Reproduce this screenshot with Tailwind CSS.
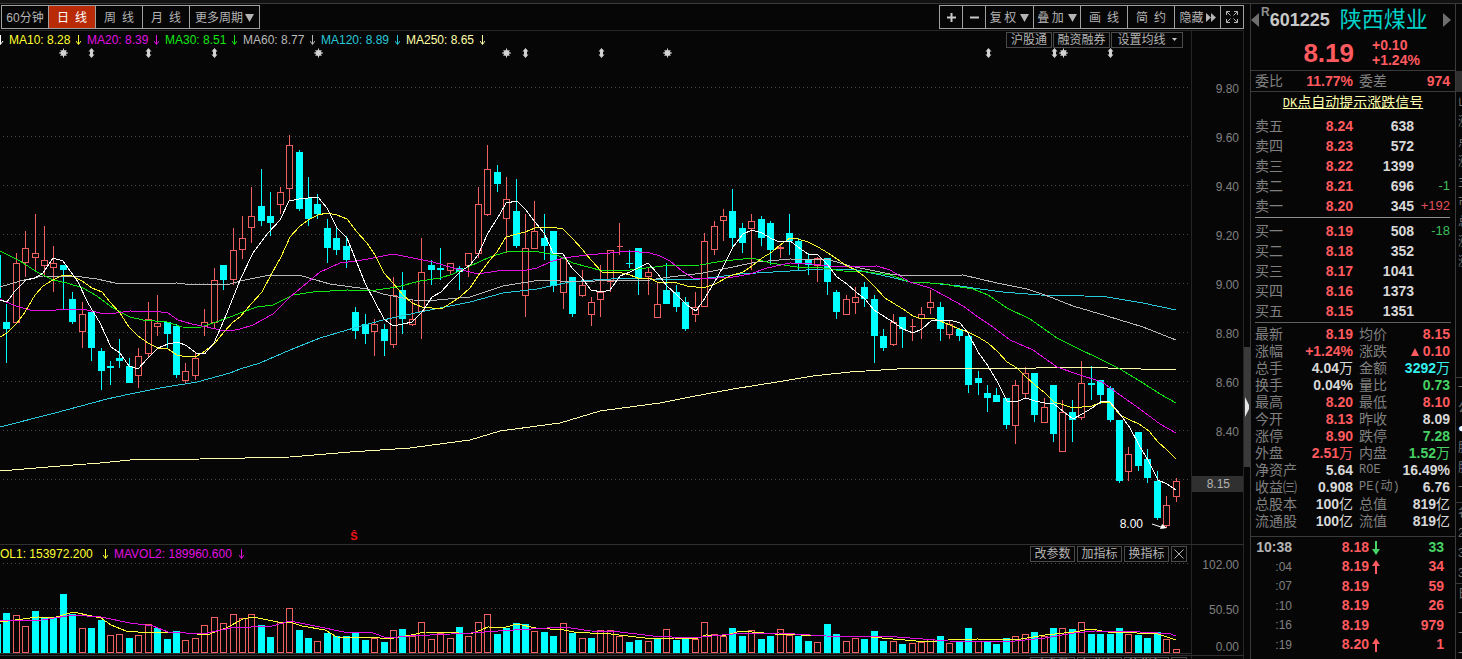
<!DOCTYPE html>
<html lang="zh-CN">
<head>
<meta charset="utf-8">
<meta name="viewport" content="width=device-width, initial-scale=1">
<title>陕西煤业 601225</title>
<script src="https://cdn.jsdelivr.net/npm/@tailwindcss/browser@4"></script>
</head>
<body class="flex h-screen flex-col overflow-hidden bg-[#060606] font-['Liberation_Sans','Noto_Sans_CJK_SC',sans-serif] text-xs text-[#b4b4b4]">
<div class="h-1 shrink-0 border-b border-[#3a3a3a] bg-[#121212]"></div>
<div class="flex min-h-0 flex-1">

  <main class="flex min-w-0 flex-1 flex-col">
    <header class="flex h-[27px] shrink-0 items-start justify-between border-b border-[#262626] pt-px pl-px">
      <nav class="flex h-6 divide-x divide-[#a0a0a0] border border-[#a0a0a0]">
        <button class="w-[47px] pt-px whitespace-nowrap">60分钟</button>
        <button class="w-[47px] bg-[#b92a06] pt-px whitespace-nowrap text-white">日&ensp;线</button>
        <button class="w-[47px] pt-px whitespace-nowrap">周&ensp;线</button>
        <button class="w-[47px] pt-px whitespace-nowrap">月&ensp;线</button>
        <button class="flex w-[69px] items-center justify-center gap-0.5 pt-px whitespace-nowrap">更多周期<svg class="h-2 w-[9px]" viewBox="0 0 9 8"><path d="M0 0h9L4.500 8z" fill="#b4b4b4"/></svg></button>
      </nav>
      <div class="flex h-6 divide-x divide-[#a0a0a0] border border-[#a0a0a0]">
        <button class="flex w-[23px] items-center justify-center" aria-label="放大"><svg class="size-[9px]" viewBox="0 0 9 9"><path d="M0 4.500h9M4.500 0v9" stroke="#c8c8c8" stroke-width="2"/></svg></button>
        <button class="flex w-[23px] items-center justify-center" aria-label="缩小"><svg class="size-[9px]" viewBox="0 0 9 9"><path d="M0 4.500h9" stroke="#c8c8c8" stroke-width="2"/></svg></button>
        <button class="flex w-[48px] items-center justify-center gap-1 pt-px whitespace-nowrap">复&thinsp;权<svg class="h-2 w-[9px]" viewBox="0 0 9 8"><path d="M0 0h9L4.500 8z" fill="#b4b4b4"/></svg></button>
        <button class="flex w-[47px] items-center justify-center gap-1 pt-px whitespace-nowrap">叠&thinsp;加<svg class="h-2 w-[9px]" viewBox="0 0 9 8"><path d="M0 0h9L4.500 8z" fill="#b4b4b4"/></svg></button>
        <button class="w-[47px] pt-px whitespace-nowrap">画&ensp;线</button>
        <button class="w-[47px] pt-px whitespace-nowrap">简&ensp;约</button>
        <button class="flex w-[46px] items-center justify-center gap-0.5 pt-px whitespace-nowrap">隐藏<svg class="h-[9px] w-2.5" viewBox="0 0 10 9"><path d="M0 0l5 4.500L0 9zM5 0l5 4.500L5 9z" fill="#b4b4b4"/></svg></button>
        <button class="flex w-[22px] items-center justify-center" aria-label="全屏"><svg class="size-3" viewBox="0 0 12 12" fill="none" stroke="#b4b4b4"><path d="M.5 4V.5H4M.5.5l4 4M8 .5h3.500V4M11.500.5l-4 4M.5 8v3.500H4M.5 11.500l4-4M11.500 8v3.500H8M11.500 11.500l-4-4"/></svg></button>
      </div>
    </header>

    <section class="flex shrink-0">
      <div class="relative min-w-0 flex-1">
        <div class="flex h-[17px] items-center justify-between pr-2">
          <div class="flex items-center leading-4 whitespace-nowrap">
            <span class="flex w-[9px] items-center text-white"><svg class="h-2.5 w-1" viewBox="2 0 4 10" fill="none" stroke="currentColor"><path d="M2.500 0v9M0 6l2.500 3.500L5 6"/></svg></span>
            <span class="flex w-[78px] items-center justify-between pr-1.5 text-[#ffff32]">MA10: 8.28<svg class="h-2.5 w-[5px]" viewBox="0 0 5 10" fill="none" stroke="currentColor"><path d="M2.500 0v9M0 6l2.500 3.500L5 6"/></svg></span>
            <span class="flex w-[78px] items-center justify-between pr-1.5 text-[#e010e0]">MA20: 8.39<svg class="h-2.5 w-[5px]" viewBox="0 0 5 10" fill="none" stroke="currentColor"><path d="M2.500 0v9M0 6l2.500 3.500L5 6"/></svg></span>
            <span class="flex w-[78px] items-center justify-between pr-1.5 text-[#14e614]">MA30: 8.51<svg class="h-2.5 w-[5px]" viewBox="0 0 5 10" fill="none" stroke="currentColor"><path d="M2.500 0v9M0 6l2.500 3.500L5 6"/></svg></span>
            <span class="flex w-[78px] items-center justify-between pr-1.5 text-[#b9b9b9]">MA60: 8.77<svg class="h-2.5 w-[5px]" viewBox="0 0 5 10" fill="none" stroke="currentColor"><path d="M2.500 0v9M0 6l2.500 3.500L5 6"/></svg></span>
            <span class="flex w-[85px] items-center justify-between pr-1.5 text-[#28c8d8]">MA120: 8.89<svg class="h-2.5 w-[5px]" viewBox="0 0 5 10" fill="none" stroke="currentColor"><path d="M2.500 0v9M0 6l2.500 3.500L5 6"/></svg></span>
            <span class="flex w-[85px] items-center justify-between pr-1.5 text-[#ffffaa]">MA250: 8.65<svg class="h-2.5 w-[5px]" viewBox="0 0 5 10" fill="none" stroke="currentColor"><path d="M2.500 0v9M0 6l2.500 3.500L5 6"/></svg></span>
          </div>
          <div class="flex gap-px leading-[14px] whitespace-nowrap">
            <button class="h-4 w-[46px] border border-[#4a4a4a]">沪股通</button>
            <button class="h-4 w-[57px] border border-[#4a4a4a]">融资融券</button>
            <button class="flex h-4 w-[72px] items-center justify-center gap-1.5 border border-[#4a4a4a]">设置均线<svg class="h-[3px] w-[5px]" viewBox="0 0 5 3"><path d="M0 0h5L2.500 3z" fill="#c8c8c8"/></svg></button>
          </div>
        </div>
        <svg id="price" class="block h-[496px] w-full" viewBox="0 48 1191 496" preserveAspectRatio="none" fill="none" shape-rendering="crispEdges" role="img" aria-label="日K线图">
          <path stroke="#484848" stroke-dasharray="1 3" d="M3 87.500H1191M3 136.500H1191M3 185.500H1191M3 234.500H1191M3 283.500H1191M3 332.500H1191M3 381.500H1191M3 430.500H1191M3 479.500H1191"/>
          <g id="candles"></g>
          <polyline stroke="#ffffaa" points="0,471 60,466 100,463 130,460 200,459 290,457 350,452 410,448 470,440 500,431 560,423 600,411 660,403 690,397 733,389 777,382 813,376 850,372 897,369 925,368.500 1000,368.400 1090,367.400 1120,368.400 1176,370"/>
          <polyline stroke="#28c8d8" points="0,427 55,413 107,399 130,394 160,388 197,382 230,373 240,369 260,363 290,350 320,338 347,330 383,320 420,312 470,302 503,293 537,289 570,282 593,280 630,278 670,280 700,279 740,274 790,271 823,269 857,270 890,277 910,282 930,283 960,286 980,289 1003,292 1040,295 1073,295.500 1107,297 1143,303 1176,310"/>
          <polyline stroke="#b9b9b9" points="0,287 20,281 43,276 77,276.400 97,279 115,283 143,284 177,283 193,285 230,284 240,281 270,275 300,275.400 330,284 367,289 383,294 413,300 433,300.400 470,297 503,286 540,280 580,282 610,280 643,281 670,277 703,273 723,269 757,262 790,259 830,260 850,266 890,274 910,276 963,275 997,283 1027,289 1045,295 1073,306 1107,316 1143,327 1176,340"/>
          <polyline stroke="#14e614" points="0,251 20,261 37,272 53,280 67,283 83,288 97,296 113,308 130,317 143,320 167,322 182,327 200,327.400 213,323 233,316 240,313 257,307 273,305 293,295 313,292 347,290 373,290.400 397,287 420,281 440,278 453,274 470,266 490,257 506,252 533,251 557,255 573,263 603,271 630,270 663,266 700,265 723,261 753,258 770,263 797,267 823,268 843,271 863,271.400 890,275 910,282 930,283 943,284 960,287 973,289 988,295 1007,308 1030,319 1057,338 1077,348 1100,359 1120,369 1143,383 1160,394 1176,403"/>
          <polyline stroke="#e010e0" points="0,299 13,305 30,310 50,311 63,309 87,310 100,313 113,313.400 130,311 157,311.400 168,313 178,320 192,324 207,327 220,330 233,330.400 240,329 253,325 273,314 290,297 308,282 320,272 340,263 357,261 373,258 393,254 413,258 433,262 453,268 470,272 478,274 497,271 527,270 537,268 550,262 563,258 587,255 610,253 628,251 650,253 660,256 670,261 682,271 693,278 703,279 733,277 750,274 767,268 790,263 807,263.400 837,267 877,266 890,270 910,282 930,288 947,297 963,306 978,317 993,327 1010,340 1033,350 1057,367 1077,374 1102,382 1120,395 1140,409 1160,424 1176,433"/>
          <polyline stroke="#ffff32" points="0,337 7,333 17,323 25,312 35,295 43,286 53,280 63,275 72,276 82,281 92,288 102,292 110,302 120,313 129,327 138,336 148,343 158,348 168,349 177,355 187,357 197,356 205,351 215,343 224,332 233,322 240,317 252,303 262,292 272,273 281,257 290,237 299,227 308,220 318,215 327,213 337,215 347,219 357,232 367,243 375,255 384,273 393,283 403,295 412,303 422,307 432,308 441,309 451,303 460,297 470,288 480,273 490,260 497,252 506,237 517,234 525,232 535,228 544,227 553,227.400 563,229 573,239 582,249 591,260 602,272 620,272.400 630,275 640,279 650,278 657,282 667,282.400 677,283 687,286 696,287 705,287.400 715,284 730,276 743,272 752,266 762,258 772,252 780,245 790,238 798,239 808,242 818,247 828,253 837,259 847,266 856,270 865,277 874,286 885,298 893,303 903,309 913,316 922,319 932,318 940,321 950,325 959,329 968,332 978,337 988,343 998,352 1007,362 1017,368 1026,377 1035,385 1045,393 1054,402 1064,405 1073,408 1082,407 1092,406 1102,402 1110,403 1120,415 1130,420 1139,424 1149,431 1158,442 1167,450 1176,459"/>
          <polyline stroke="#ffffff" points="0,300 7,302 15,291 26,280 35,278 43,273 53,258 63,261 78,282 88,303 100,323 111,347 120,353 129,366 138,369 148,358 158,348 168,344 178,342 187,346 196,353 205,353.400 214,343 224,320 233,298 240,280 253,253 268,233 280,220 289,201 299,199 318,197 327,208 337,228 347,238 355,258 365,283 375,302 384,319 393,326 403,324 412,322 422,312 432,297 441,292 451,281 460,272 470,265 478,255 488,233 500,214 506,203 517,201 526,210 535,222 544,233 553,253 563,254 572,268 582,278 591,290 602,292 610,290 620,276 630,272 640,267 648,263 657,273 667,286 677,295 687,305 696,311 705,298 714,283 723,267 733,247 743,234 752,230 762,233 772,239 780,242 790,241 798,247 808,254 818,255 828,265 837,277 847,284 856,292 865,299 874,310 885,317 893,322 903,329 913,333 922,329 932,320 941,321 950,320 960,323 968,333 978,352 988,366 998,383 1007,401 1017,401.400 1026,398 1035,401 1045,403 1054,404 1064,412 1073,419 1082,414 1092,408 1102,401 1110,402 1120,414 1130,428 1139,445 1149,462 1158,480 1167,484 1176,490"/>
          <g id="events" shape-rendering="auto"></g>
          <g shape-rendering="auto"><path stroke="#fff" d="M1152 524l12 4"/><path fill="#fff" d="M1167 528l-7 1 2-5z"/></g>
        </svg>
        <span class="absolute right-12 bottom-3 leading-4 text-white">8.00</span>
        <span class="absolute bottom-px left-[350px] w-2 text-center text-[11px] leading-[14px] font-bold text-[#f01414]">Ŝ</span>
      </div>
      <div class="w-[53px] border-x border-[#262626] pt-[34px] text-right text-[#808080]">
        <div class="h-[49px] pr-1 leading-[49px]">9.80</div>
        <div class="h-[49px] pr-1 leading-[49px]">9.60</div>
        <div class="h-[49px] pr-1 leading-[49px]">9.40</div>
        <div class="h-[49px] pr-1 leading-[49px]">9.20</div>
        <div class="h-[49px] pr-1 leading-[49px]">9.00</div>
        <div class="h-[49px] pr-1 leading-[49px]">8.80</div>
        <div class="h-[49px] pr-1 leading-[49px]">8.60</div>
        <div class="h-[49px] pr-1 leading-[49px]">8.40</div>
        <div class="mt-[19px] h-4 bg-[#303030] pr-[13px] leading-4 text-[#b4b4b4]">8.15</div>
      </div>
    </section>

    <section class="flex shrink-0 border-t border-[#303030]">
      <div class="min-w-0 flex-1">
        <div class="flex h-[18px] items-center justify-between pr-1">
          <div class="flex items-center leading-4 whitespace-nowrap">
            <span class="flex w-[114px] items-center justify-between pr-1.5 text-[#ffff32]">OL1: 153972.200<svg class="h-2.5 w-[5px]" viewBox="0 0 5 10" fill="none" stroke="currentColor"><path d="M2.500 0v9M0 6l2.500 3.500L5 6"/></svg></span>
            <span class="flex w-[136px] items-center justify-between pr-1.5 text-[#e010e0]">MAVOL2: 189960.600<svg class="h-2.5 w-[5px]" viewBox="0 0 5 10" fill="none" stroke="currentColor"><path d="M2.500 0v9M0 6l2.500 3.500L5 6"/></svg></span>
          </div>
          <div class="flex gap-0.5 leading-[14px] whitespace-nowrap">
            <button class="h-4 w-[45px] border border-[#4a4a4a]">改参数</button>
            <button class="h-4 w-[45px] border border-[#4a4a4a]">加指标</button>
            <button class="h-4 w-[45px] border border-[#4a4a4a]">换指标</button>
            <button class="flex size-4 items-center justify-center border border-[#4a4a4a]" aria-label="关闭"><svg class="size-2.5" viewBox="0 0 10 10"><path d="M.5.5l9 9M9.500.5l-9 9" stroke="#b4b4b4"/></svg></button>
          </div>
        </div>
        <svg id="volume" class="block h-[92px] w-full" viewBox="0 563 1191 92" preserveAspectRatio="none" fill="none" shape-rendering="crispEdges" role="img" aria-label="成交量">
          <path stroke="#484848" stroke-dasharray="1 3" d="M3 563.500H1191M3 608.500H1191"/>
          <path stroke="#303030" d="M0 653.500H1191"/>
          <g id="bars"></g>
          <polyline stroke="#ffff32" points="0,622 38,617 55,617.400 73,612 92,616 101,618 111,625 126,631 149,633 176,632 207,635 226,628 243,619 253,617 283,623 290,622 302,626 325,630 337,637 375,637.400 388,639 411,635 425,632 459,633 471,634 488,627 505,627.400 517,624 536,628 564,630 574,632 590,633 611,634 653,639 674,638 697,638.400 706,635 725,635.400 741,631 775,634 826,636 864,636.400 927,642 948,640 977,639 1015,640 1045,635 1074,632 1091,629 1108,632 1137,633 1158,634 1176,640"/>
          <polyline stroke="#e010e0" points="0,621 42,620 73,615 101,617 130,623 153,626 168,632 203,634 230,628 272,626 290,621 310,625 344,632 373,633 387,638 410,636 471,633 498,631 564,627 591,631 615,631.400 653,636 691,638 733,634 779,633 826,636 897,637 948,641 1011,641.400 1045,638 1074,633 1095,631 1129,631.400 1158,633 1169,633.400 1176,636"/>
        </svg>
      </div>
      <div class="flex w-[53px] flex-col border-x border-[#262626] pt-3 pr-1 text-right leading-4 text-[#808080]">
        <div class="h-[45px]">102.00</div><div class="h-[37px]">50.50</div><div>0.00</div>
      </div>
    </section>

    <section class="flex min-h-0 flex-1 overflow-hidden border-t border-[#303030]">
      <div class="flex flex-1 justify-end gap-0.5 pt-px pr-1 leading-[14px] whitespace-nowrap">
        <button class="h-4 w-[45px] border border-[#4a4a4a]">改参数</button>
        <button class="h-4 w-[45px] border border-[#4a4a4a]">加指标</button>
        <button class="h-4 w-[45px] border border-[#4a4a4a]">换指标</button>
        <button class="size-4 border border-[#4a4a4a]" aria-label="关闭"></button>
      </div>
      <div class="w-[53px] border-x border-[#262626]"></div>
    </section>
  </main>

  <div class="flex w-1.5 shrink-0 flex-col pt-[343px]">
    <div class="flex h-[120px] items-center bg-[#3a3a3a]"><svg class="h-5 w-1.5" viewBox="0 0 6 20"><path d="M1 0l4 8v4l-4 8z" fill="#e6e6e6"/></svg></div>
  </div>

  <aside class="w-[206px] shrink-0 overflow-hidden border-x border-[#3a3a3a] whitespace-nowrap">
    <div class="flex h-8 items-center">
      <button aria-label="上一只"><svg class="h-3.5 w-2" viewBox="0 0 8 14"><path d="M8 0v14L0 7z" fill="#6e6e6e"/></svg></button>
      <span class="self-start pt-0.5 pl-0.5 text-xs leading-3 font-bold text-[#909090]">R</span>
      <span class="text-lg font-bold text-[#c8c8c8]">601225</span>
      <h1 class="flex-1 pl-2.5 text-[22px] leading-8 font-normal text-[#00d2c8]">陕西煤业</h1>
      <button class="pr-1" aria-label="下一只"><svg class="h-3.5 w-2" viewBox="0 0 8 14"><path d="M0 0v14l8-7z" fill="#6e6e6e"/></svg></button>
    </div>
    <div class="flex h-[35px] items-center border-b border-[#3a3a3a] text-[#ff5a5f]">
      <span class="w-[103px] text-right text-[26px] leading-8 font-bold">8.19</span>
      <span class="pl-[18px] text-sm leading-[15px] font-bold">+0.10<br>+1.24%</span>
    </div>
    <div class="flex h-[21px] items-center border-b border-[#3a3a3a] pr-[5px] pl-1 text-sm leading-5">
      <span class="text-[#808080]">委比</span><span class="w-[70px] text-right font-bold text-[#ff5a5f]">11.77%</span>
      <span class="pl-1.5 text-[#808080]">委差</span><span class="flex-1 text-right font-bold text-[#ff5a5f]">974</span>
    </div>
    <div class="h-6 text-center text-sm leading-5"><a href="#" class="text-[#ffffaa] underline"><span class="font-['Liberation_Mono',monospace] text-xs">DK</span>点自动提示涨跌信号</a></div>

    <table class="mx-1 w-[195px] table-fixed text-right text-sm leading-5 font-bold text-[#d8d8d8]">
      <colgroup><col class="w-[38px]"><col class="w-[60px]"><col class="w-[61px]"><col class="w-9"></colgroup>
      <tbody>
        <tr><th class="text-left font-normal text-[#808080]">卖五</th><td class="text-[#ff5a5f]">8.24</td><td>638</td><td></td></tr>
        <tr><th class="text-left font-normal text-[#808080]">卖四</th><td class="text-[#ff5a5f]">8.23</td><td>572</td><td></td></tr>
        <tr><th class="text-left font-normal text-[#808080]">卖三</th><td class="text-[#ff5a5f]">8.22</td><td>1399</td><td></td></tr>
        <tr><th class="text-left font-normal text-[#808080]">卖二</th><td class="text-[#ff5a5f]">8.21</td><td>696</td><td class="text-[13px] font-normal text-[#3cbe5a]">-1</td></tr>
        <tr><th class="text-left font-normal text-[#808080]">卖一</th><td class="text-[#ff5a5f]">8.20</td><td>345</td><td class="text-[13px] font-normal text-[#e0505a]">+192</td></tr>
      </tbody>
    </table>
    <table class="mx-1 mt-px w-[195px] table-fixed border-t border-[#909090] text-right text-sm leading-5 font-bold text-[#d8d8d8]">
      <colgroup><col class="w-[38px]"><col class="w-[60px]"><col class="w-[61px]"><col class="w-9"></colgroup>
      <tbody>
        <tr><th class="pt-[3px] text-left font-normal text-[#808080]">买一</th><td class="pt-[3px] text-[#ff5a5f]">8.19</td><td class="pt-[3px]">508</td><td class="pt-[3px] text-[13px] font-normal text-[#3cbe5a]">-18</td></tr>
        <tr><th class="text-left font-normal text-[#808080]">买二</th><td class="text-[#ff5a5f]">8.18</td><td>352</td><td></td></tr>
        <tr><th class="text-left font-normal text-[#808080]">买三</th><td class="text-[#ff5a5f]">8.17</td><td>1041</td><td></td></tr>
        <tr><th class="text-left font-normal text-[#808080]">买四</th><td class="text-[#ff5a5f]">8.16</td><td>1373</td><td></td></tr>
        <tr><th class="text-left font-normal text-[#808080]">买五</th><td class="text-[#ff5a5f]">8.15</td><td>1351</td><td></td></tr>
      </tbody>
    </table>
    <div class="mx-1 mt-px h-1 border-t border-[#606060]"></div>
    <table class="mx-1 w-[195px] table-fixed text-right text-sm leading-[17px] font-bold text-[#d8d8d8]">
      <colgroup><col class="w-[43px]"><col class="w-[55px]"><col class="w-[46px]"><col class="w-[51px]"></colgroup>
      <tbody>
        <tr><th class="text-left font-normal text-[#808080]">最新</th><td class="text-[#ff5a5f]">8.19</td><th class="pl-1.5 text-left font-normal text-[#808080]">均价</th><td class="text-[#ff5a5f]">8.15</td></tr>
        <tr><th class="text-left font-normal text-[#808080]">涨幅</th><td class="text-[#ff5a5f]">+1.24%</td><th class="pl-1.5 text-left font-normal text-[#808080]">涨跌</th><td class="text-[#ff5a5f]"><svg class="mr-1 inline size-2 align-baseline" viewBox="0 0 8 8"><path d="M4 0l4 8H0z" fill="#ff5a5f"/></svg>0.10</td></tr>
        <tr><th class="text-left font-normal text-[#808080]">总手</th><td>4.04<span class="font-normal">万</span></td><th class="pl-1.5 text-left font-normal text-[#808080]">金额</th><td class="text-[#32f0f0]">3292<span class="font-normal">万</span></td></tr>
        <tr><th class="text-left font-normal text-[#808080]">换手</th><td>0.04%</td><th class="pl-1.5 text-left font-normal text-[#808080]">量比</th><td class="text-[#46d264]">0.73</td></tr>
        <tr><th class="text-left font-normal text-[#808080]">最高</th><td class="text-[#ff5a5f]">8.20</td><th class="pl-1.5 text-left font-normal text-[#808080]">最低</th><td class="text-[#ff5a5f]">8.10</td></tr>
        <tr><th class="text-left font-normal text-[#808080]">今开</th><td class="text-[#ff5a5f]">8.13</td><th class="pl-1.5 text-left font-normal text-[#808080]">昨收</th><td>8.09</td></tr>
        <tr><th class="text-left font-normal text-[#808080]">涨停</th><td class="text-[#ff5a5f]">8.90</td><th class="pl-1.5 text-left font-normal text-[#808080]">跌停</th><td class="text-[#46d264]">7.28</td></tr>
        <tr><th class="text-left font-normal text-[#808080]">外盘</th><td class="text-[#ff5a5f]">2.51<span class="font-normal">万</span></td><th class="pl-1.5 text-left font-normal text-[#808080]">内盘</th><td class="text-[#46d264]">1.52<span class="font-normal">万</span></td></tr>
        <tr><th class="text-left font-normal text-[#808080]">净资产</th><td>5.64</td><th class="pl-1.5 text-left font-['Liberation_Mono','Noto_Sans_CJK_SC',monospace] text-xs leading-[17px] font-normal text-[#808080]">ROE</th><td>16.49%</td></tr>
        <tr><th class="text-left font-normal text-[#808080]">收益㈢</th><td>0.908</td><th class="pl-1.5 text-left font-['Liberation_Mono','Noto_Sans_CJK_SC',monospace] text-xs leading-[17px] font-normal text-[#808080]">PE(动)</th><td>6.76</td></tr>
        <tr><th class="text-left font-normal text-[#808080]">总股本</th><td>100<span class="font-normal">亿</span></td><th class="pl-1.5 text-left font-normal text-[#808080]">总值</th><td>819<span class="font-normal">亿</span></td></tr>
        <tr><th class="text-left font-normal text-[#808080]">流通股</th><td>100<span class="font-normal">亿</span></td><th class="pl-1.5 text-left font-normal text-[#808080]">流值</th><td>819<span class="font-normal">亿</span></td></tr>
      </tbody>
    </table>
    <div class="mt-1.5 border-t border-[#3a3a3a]"></div>
    <table class="mx-1 w-[195px] table-fixed text-right text-sm leading-[19px] font-bold text-[#ff5a5f]">
      <colgroup><col class="w-[37px]"><col class="w-[77px]"><col class="w-[11px]"><col class="w-[70px]"></colgroup>
      <tbody>
        <tr class="odd:h-5 even:h-[19px]"><th class="font-bold text-[#b4b4b4]">10:38</th><td>8.18</td><td><svg class="inline h-3.5 w-2" viewBox="0 0 8 14"><path d="M3 0h2v8h3l-4 6-4-6h3z" fill="#46d264"/></svg></td><td class="pr-1.5 text-[#46d264]">33</td></tr>
        <tr class="odd:h-5 even:h-[19px]"><th class="text-xs font-normal text-[#808080]">:04</th><td>8.19</td><td><svg class="inline h-3.5 w-2" viewBox="0 0 8 14"><path d="M3 14h2V6h3L4 0 0 6h3z" fill="#ff5a5f"/></svg></td><td class="pr-1.5">34</td></tr>
        <tr class="odd:h-5 even:h-[19px]"><th class="text-xs font-normal text-[#808080]">:07</th><td>8.19</td><td></td><td class="pr-1.5">59</td></tr>
        <tr class="odd:h-5 even:h-[19px]"><th class="text-xs font-normal text-[#808080]">:10</th><td>8.19</td><td></td><td class="pr-1.5">26</td></tr>
        <tr class="odd:h-5 even:h-[19px]"><th class="text-xs font-normal text-[#808080]">:16</th><td>8.19</td><td></td><td class="pr-1.5">979</td></tr>
        <tr class="odd:h-5 even:h-[19px]"><th class="text-xs font-normal text-[#808080]">:19</th><td>8.20</td><td><svg class="inline h-3.5 w-2" viewBox="0 0 8 14"><path d="M3 14h2V6h3L4 0 0 6h3z" fill="#ff5a5f"/></svg></td><td class="pr-1.5">1</td></tr>
        <tr class="odd:h-5 even:h-[19px]"><th></th><td>8.20</td><td></td><td class="pr-1.5">2</td></tr>
      </tbody>
    </table>
  </aside>

  <div class="w-1.5 shrink-0 overflow-hidden pt-[67px] text-xs leading-5 text-[#707070]">
    <div class="h-[21px] bg-[#303030]"></div>
    <div class="pl-0.5 whitespace-nowrap">山<br>涨<br>点<br>涨<br>主<br>市<br>总<br>涨<br>涨</div>
    <div class="mt-[105px] border-t border-[#3a3a3a] pl-0.5 whitespace-nowrap">一<br>公<br><span class="text-white">●</span><br>股<br>股<br>一</div>
    <div class="mt-1 border-t border-[#3a3a3a] pl-0.5 whitespace-nowrap">名<br>2<br>3<br>3</div>
    <div class="border-t border-[#3a3a3a] pl-0.5 whitespace-nowrap">日<br>一<br>一<br>一</div>
  </div>
</div>

<script>
// Each candle: colour (c = down, r = up), high, body top, body bottom, low.
const candles = `c304 322 329 363|r253 263 323 323|r231 248 263 277|r214 253 258 270|r226 260 266 275|r246 263 268 292|c265 265 270 309|c292 299 322 324|r302 314 332 348|c312 312 348 361|c348 351 371 390|c361 366 368 385|c339 358 361 368|c358 366 383 383|r348 356 376 388|r302 319 354 357|r295 323 327 336|c322 322 334 348|c324 326 375 378|r363 371 381 384|r353 358 376 380|r309 322 327 336|r268 280 323 328|c265 265 280 290|r228 250 280 285|r216 238 250 259|r187 216 228 243|c169 206 221 226|c192 216 223 236|r187 192 205 214|r135 145 189 200|c150 152 209 211|c177 198 219 226|c194 204 214 219|c219 228 248 263|c226 238 250 255|c236 246 260 268|c307 312 331 339|c314 324 334 344|r319 324 332 356|c324 329 341 356|r277 295 345 348|c272 290 319 334|r299 319 325 326|r238 272 312 339|c260 265 270 285|c248 268 270 280|r263 263 271 275|c266 268 272 290|r253 253 266 277|r187 204 254 258|r145 169 215 216|c165 172 184 192|r177 199 219 253|c179 211 246 248|r214 248 296 317|r201 231 249 249|c214 238 246 260|c231 231 286 292|r258 258 293 309|c277 277 314 317|r270 285 296 297|r297 302 315 326|r265 292 300 317|r250 250 282 292|r223 246 246 255|c250 263 264 268|c248 248 278 295|r268 272 277 295|r282 304 318 318|c263 290 304 304|c285 292 307 312|c297 302 329 331|r292 307 315 322|r233 241 307 307|r221 226 250 255|r209 216 221 241|c189 211 238 247|c223 228 243 253|r214 221 229 270|c216 219 238 246|c221 223 250 265|r245 247 249 258|c214 233 241 255|c238 241 263 270|c253 260 265 275|r257 258 266 282|c258 258 282 295|c290 292 312 319|r295 299 315 315|r287 297 303 314|c282 287 299 307|c295 299 336 363|c329 336 348 351|r314 322 345 346|c317 317 329 348|r319 326 326 341|r307 314 319 339|r290 302 308 314|c302 307 329 341|r320 324 335 339|c328 329 336 341|c333 336 385 393|c371 378 383 395|c385 393 398 412|c388 395 402 402|c398 398 425 429|r380 385 426 444|r367 373 394 398|c373 373 415 422|r398 407 423 423|c385 385 434 442|r400 412 452 452|c400 412 420 442|r361 383 418 420|c366 383 385 400|c380 380 395 404|c386 388 420 422|c420 420 481 483|r447 454 472 481|c432 432 466 471|c449 459 478 483|c471 481 518 520|r496 505 526 528|r478 481 497 502`.split('|');
// Each volume bar: colour and top edge.
const bars = `c613 r615 r626 c611 c617 c617 c594 c614 r628 c628 c620 r635 r634 c638 r635 r624 c628 c639 c631 r640 r638 r625 r617 r623 r614 r618 r614 c625 c637 r622 r608 c630 c638 r641 c633 c636 c636 c633 c640 r638 c642 r630 c629 r636 r622 r639 r633 r638 c627 r636 r622 r614 c634 c628 c623 c624 r631 c632 c636 r623 c633 r638 c638 r630 r630 r636 c642 c640 r641 c638 r629 c640 c639 r639 r622 r634 r636 c628 c636 r630 c639 c636 r629 r635 c636 c641 r642 c624 c634 r641 r638 c639 c631 c641 r641 c644 r643 r642 r639 c636 r643 c642 c628 r641 c641 c644 c638 r636 r634 c632 r636 c628 r628 c629 r622 c634 c634 c634 c628 r634 c635 c638 c632 r639 r649`.split(' ');
const xAt = i => Math.round(6.3 + 9.43 * i);
let down = 'M-6 255h7v43h-7z', up = '';
candles.forEach((s, i) => {
  const [h, t, b, l] = s.slice(1).split(' ').map(Number), x = xAt(i);
  if (s[0] === 'c') {
    down += `M${x - 3} ${t}h7V${Math.max(b, t + 1)}h-7zM${x} ${h}h1V${l}h-1z`;
  } else {
    up += `M${x - 2.5} ${t + .5}h6V${b - (b > t ? .5 : -.5)}h-6z`;
    if (t > h) up += `M${x + .5} ${h}V${t}`;
    if (l > b) up += `M${x + .5} ${b}V${l}`;
  }
});
document.getElementById('candles').innerHTML = `<path fill="#00ffff" d="${down}"/><path stroke="#f06060" d="${up}"/>`;
let vDown = 'M-6 624h7v29h-7z', vUp = '';
bars.forEach((s, i) => {
  const t = +s.slice(1), x = xAt(i);
  if (s[0] === 'c') vDown += `M${x - 3} ${t}h7V653h-7z`;
  else vUp += `M${x - 2.5} ${t + .5}h6V652.5h-6z`;
});
document.getElementById('bars').innerHTML = `<path fill="#00ffff" d="${vDown}"/><path stroke="#f06060" d="${vUp}"/>`;
const star = x => `<path stroke="#d2d2d2" d="M${x + .5} 48.500v9M${x - 4} 53h9M${x - 2.500} 50l6 6M${x + 3.500} 50l-6 6"/><circle cx="${x + .5}" cy="53" r="3" fill="#d2d2d2"/>`;
const updown = x => `<path fill="#d2d2d2" d="M${x + .5} 48l3 3.500h-1.500v3h1.500l-3 3.500-3-3.500h1.500v-3h-1.500z"/>`;
document.getElementById('events').innerHTML =
  [63, 318, 506, 667, 1063].map(star).join('') +
  [91, 148, 214, 525, 601, 988, 1054, 1110].map(updown).join('');
</script>
</body>
</html>
